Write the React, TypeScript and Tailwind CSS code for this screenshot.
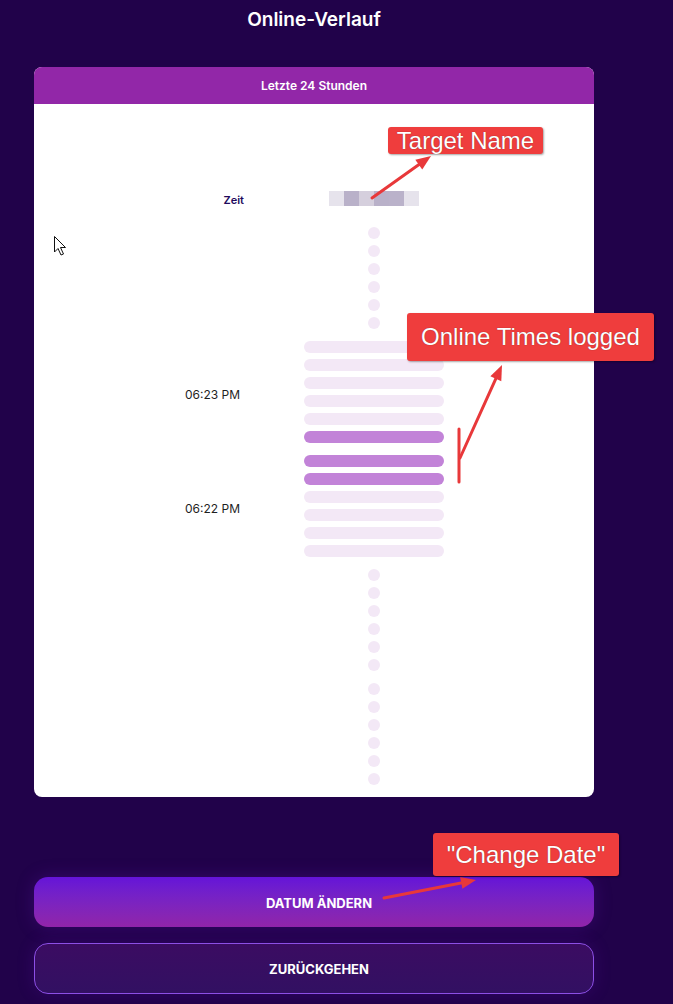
import React from 'react';

type Row = { label?: string; kind: 'dot' | 'bar'; on?: number[] };

const rows: Row[] = [
  { kind: 'dot' },
  { label: '06:23 PM', kind: 'bar', on: [5] },
  { label: '06:22 PM', kind: 'bar', on: [0, 1] },
  { kind: 'dot' },
  { kind: 'dot' },
];

const nameShades = ['bg-[#e6e3ec]', 'bg-[#b9b1c9]', 'bg-[#d5cfdd]', 'bg-[#b9b1c9]', 'bg-[#bab2ca]', 'bg-[#e6e3ec]'];

function head(x1: number, y1: number, x2: number, y2: number) {
  const a = Math.atan2(y2 - y1, x2 - x1);
  const len = 15;
  const w = 6;
  const bx = x2 - Math.cos(a) * len;
  const by = y2 - Math.sin(a) * len;
  const px = -Math.sin(a) * w;
  const py = Math.cos(a) * w;
  return `${x2},${y2} ${bx + px},${by + py} ${bx - px},${by - py}`;
}

const Arrow: React.FC<{ x1: number; y1: number; x2: number; y2: number }> = ({ x1, y1, x2, y2 }) => {
  const a = Math.atan2(y2 - y1, x2 - x1);
  return (
    <g>
      <line x1={x1} y1={y1} x2={x2 - Math.cos(a) * 10} y2={y2 - Math.sin(a) * 10} stroke="#e8383a" strokeWidth={3} strokeLinecap="round" />
      <polygon points={head(x1, y1, x2, y2)} fill="#e8383a" />
    </g>
  );
};

const Note: React.FC<{ className: string; children: React.ReactNode }> = ({ className, children }) => (
  <div
    className={`absolute flex items-center justify-center rounded-[3px] bg-[#ef3d3d] text-[24px] text-white shadow-[1px_1px_2px_rgba(0,0,0,0.35)] [text-shadow:0_0_1px_rgba(0,0,0,0.5)] ${className}`}
    style={{ fontFamily: '"Liberation Sans", Arial, sans-serif' }}
  >
    {children}
  </div>
);

const App: React.FC = () => {
  return (
    <div className="relative min-h-screen w-[673px] bg-[#21024a] pl-[34px]" style={{ fontFamily: 'Inter, "Noto Sans", sans-serif' }}>
      <div className="w-[560px] pt-[8px]">
        <h1 className="text-center text-[19px] font-semibold leading-[24px] text-white">Online-Verlauf</h1>

        <div className="mt-[35px] overflow-hidden rounded-[8px] bg-white">
          <div className="flex h-[37px] items-center justify-center bg-[#9227a8] text-[12px] font-semibold text-white">
            Letzte 24 Stunden
          </div>

          <div className="pt-[87px] pb-[12px]">
            <div className="flex h-[15px] items-center">
              <div className="w-[210px] pt-[3px] text-right text-[11px] font-semibold text-[#21095c]">Zeit</div>
              <div className="ml-[60px] flex w-[140px] justify-center">
                {nameShades.map((c, i) => (
                  <div key={i} className={`h-[15px] w-[15px] ${c}`} />
                ))}
              </div>
            </div>

            <div className="mt-[21px] flex flex-col gap-[12px]">
              {rows.map((r, ri) => (
                <div key={ri} className="flex items-center">
                  <div className="w-[206px] pt-[5px] text-right text-[12px] text-[#1f1f1f]">{r.label}</div>
                  <div className="ml-[64px] flex w-[140px] flex-col items-center gap-[6px]">
                    {Array.from({ length: 6 }).map((_, i) =>
                      r.kind === 'dot' ? (
                        <div key={i} className="h-[12px] w-[12px] rounded-full bg-[#f3e8f6]" />
                      ) : (
                        <div
                          key={i}
                          className={`h-[12px] w-[140px] rounded-full ${r.on?.includes(i) ? 'bg-[#c283d8]' : 'bg-[#f3e8f6]'}`}
                        />
                      )
                    )}
                  </div>
                </div>
              ))}
            </div>
          </div>
        </div>

        <button className="mt-[80px] flex h-[50px] w-full items-center justify-center rounded-[14px] bg-gradient-to-b from-[#6513d8] to-[#9124a9] pt-[3px] pl-[10px] text-[13px] font-bold uppercase text-white shadow-[0_0_18px_rgba(110,30,200,0.25)]">
          Datum ändern
        </button>
        <button className="mt-[16px] flex h-[51px] w-full items-center justify-center rounded-[14px] border border-[#8d4fe6] bg-gradient-to-b from-[#3b0c62] to-[#321062] pt-[2px] pl-[10px] text-[13px] font-bold uppercase text-white shadow-[0_0_18px_rgba(110,30,200,0.2)]">
          Zurückgehen
        </button>
      </div>

      <svg className="pointer-events-none absolute left-0 top-0" width={673} height={1004}>
        <Arrow x1={372} y1={198} x2={431} y2={156} />
        <line x1={459} y1={429} x2={459} y2={482} stroke="#e8383a" strokeWidth={3} strokeLinecap="round" />
        <Arrow x1={460} y1={458} x2={502} y2={365} />
        <Arrow x1={384} y1={898} x2={476} y2={880} />
        <path d="M54.5 236.5 L54.5 252 L58 248.5 L61 255 L63.5 254 L60.5 247.5 L65.5 247.5 Z" fill="white" stroke="#111" strokeWidth={1} strokeLinejoin="round" />
      </svg>

      <Note className="left-[388px] top-[127px] h-[27px] w-[155px]">Target Name</Note>
      <Note className="left-[407px] top-[313px] h-[48px] w-[247px]">Online Times logged</Note>
      <Note className="left-[433px] top-[833px] h-[43px] w-[186px]">"Change Date"</Note>
    </div>
  );
};

export default App;
